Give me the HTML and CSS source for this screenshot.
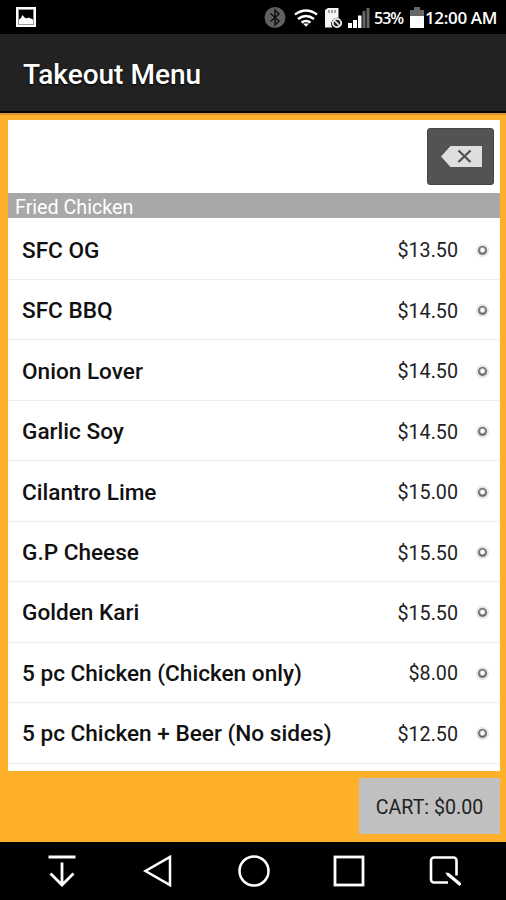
FILE: index.html
```
<!DOCTYPE html>
<html lang="en">
<head>
<meta charset="utf-8">
<title>Takeout Menu</title>
<link rel="stylesheet" href="styles.css">
</head>
<body>
<div class="screen">
  <div class="status">
    <svg class="photo" width="20" height="20" viewBox="0 0 20 20"><rect width="20" height="20" fill="#fff"/><rect x="2.500" y="2.500" width="15" height="15" fill="#000" stroke="#999"/><path d="M3 12.500l2-1.500 1.500-3 2 2.500 2 1 2-1 4.500 2V17H3z" fill="#fff"/></svg>
    <svg class="indicators" width="106" height="24" viewBox="0 0 106 24">
      <circle cx="11" cy="12.500" r="10.500" fill="#606060"/>
      <path d="M6.500 8.500l8.500 7.500-4 4V5l4 4-8.500 7.500" fill="none" stroke="#111" stroke-width="1.500"/>
      <g fill="none" stroke="#fff" stroke-width="2.400"><path d="M31 9.500q11-8 22 0M34 14q8-6 16 0M37.500 17.500q4.500-3 9 0"/></g>
      <path d="M39 18.500h6l-3 3.200z" fill="#fff"/>
      <path d="M61 5l3-2h10.500v10a6 6 0 0 0-6 9.500H61z" fill="#f5f5f5"/>
      <path d="M65 5v3M68 5v3M71 5v3" stroke="#555" stroke-width="1"/>
      <circle cx="73" cy="18" r="4.200" fill="#222" stroke="#eee" stroke-width="1.800"/><path d="M70 15l6 6" stroke="#eee" stroke-width="1.500"/>
      <path d="M84 18h4v5h-4zM89 15h4v8h-4zM94 10.500h3.500V23H94z" fill="#fff"/>
      <path d="M98.500 6h3v17h-3zM102.500 3h3v20h-3z" fill="#666"/>
    </svg>
    <span class="percent">53%</span>
    <svg class="battery" width="14" height="22" viewBox="0 0 14 22"><path d="M4 0h6v3h4v8H0V3h4z" fill="#666"/><path d="M0 9h14v12H0z" fill="#fff"/></svg>
    <span class="time">12:00 AM</span>
  </div>
  <header class="titlebar"><h1>Takeout Menu</h1></header>
  <main class="content">
    <section class="panel">
      <div class="search">
        <button class="erase" aria-label="Clear"><svg width="41" height="21" viewBox="0 0 41 21"><path d="M0 10.500L9.500 0H41v21H9.500z" fill="#dedede"/><path d="M17.500 4.500l12 11.500m0-11.500l-12 11.500" stroke="#505050" stroke-width="2.300"/></svg></button>
      </div>
      <h2>Fried Chicken</h2>
      <ul class="menu">
        <li><span class="name">SFC OG</span><span class="price">$13.50</span><i class="knob"></i></li>
        <li><span class="name">SFC BBQ</span><span class="price">$14.50</span><i class="knob"></i></li>
        <li><span class="name">Onion Lover</span><span class="price">$14.50</span><i class="knob"></i></li>
        <li><span class="name">Garlic Soy</span><span class="price">$14.50</span><i class="knob"></i></li>
        <li><span class="name">Cilantro Lime</span><span class="price">$15.00</span><i class="knob"></i></li>
        <li><span class="name">G.P Cheese</span><span class="price">$15.50</span><i class="knob"></i></li>
        <li><span class="name">Golden Kari</span><span class="price">$15.50</span><i class="knob"></i></li>
        <li><span class="name">5 pc Chicken (Chicken only)</span><span class="price">$8.00</span><i class="knob"></i></li>
        <li><span class="name">5 pc Chicken + Beer (No sides)</span><span class="price">$12.50</span><i class="knob"></i></li>
      </ul>
    </section>
    <button class="cart">CART: $0.00</button>
  </main>
  <nav class="navbar">
    <svg width="32" height="34" viewBox="0 0 32 34"><path d="M2.500 3h27M16 8.500v22M4.500 19.500L16 31l11.500-11.500" fill="none" stroke="#fff" stroke-width="2.800"/></svg>
    <svg width="32" height="34" viewBox="0 0 32 34"><path d="M28 3v28L3.500 17z" fill="none" stroke="#fff" stroke-width="2.500"/></svg>
    <svg width="32" height="34" viewBox="0 0 32 34"><circle cx="16" cy="17" r="14.500" fill="none" stroke="#fff" stroke-width="2.500"/></svg>
    <svg width="32" height="34" viewBox="0 0 32 34"><rect x="2" y="3" width="28" height="28" fill="none" stroke="#fff" stroke-width="2.800"/></svg>
    <svg width="32" height="34" viewBox="0 0 32 34"><path d="M19 28.500H5a3 3 0 0 1-3-3V6.500a3 3 0 0 1 3-3h19.500a3 3 0 0 1 3 3v15" fill="none" stroke="#fff" stroke-width="2.600"/><path d="M16.500 18.500l1.500 3L30.500 32l2-2.500L20 19z" fill="#fff"/></svg>
  </nav>
</div>
</body>
</html>
```
FILE: styles.css
```
* { box-sizing: border-box; }
body { margin: 0; background: #000; font-family: Roboto, sans-serif; }
.screen { width: 506px; height: 900px; display: flex; flex-direction: column; overflow: hidden; }
.status { height: 34px; padding: 0 8px 0 16px; display: flex; align-items: center; background: #000; color: #fff; }
.photo { margin-right: auto; }
.indicators { margin-right: 4px; }
.percent, .time { font: 600 17px/34px "Open Sans", sans-serif; white-space: nowrap; }
.percent { width: 36px; padding-top: 1px; font-size: 16px; letter-spacing: -1px; }
.battery { margin-top: 1px; }
.time { width: 74px; padding: 1px 0 0 1px; letter-spacing: -0.35px; }
.titlebar { height: 79px; padding: 4px 23px 0; display: flex; align-items: center; background: #222; border-bottom: 2px solid #080500; }
h1 { margin: 0; color: #fff; font-size: 28px; font-weight: 500; text-shadow: 0 1px 2px #000; }
.content { height: 729px; padding: 7px 6px 0 8px; background: #ffb02b; border-top: 2px solid #db9528; display: flex; flex-direction: column; }
.panel { height: 651px; margin-top: -2px; background: #fff; flex: none; overflow: hidden; }
.search { height: 73px; padding: 8px 6px 0; display: flex; justify-content: flex-end; }
.erase { width: 67px; height: 57px; padding: 0 0 0 1px; border: 1px solid #444; border-radius: 3px; background: #535355; display: flex; align-items: center; justify-content: center; }
h2 { margin: 0; height: 25px; padding-left: 7px; background: #a8a8a8; color: #fff; font-size: 19.700px; font-weight: 400; line-height: 29px; overflow: hidden; }
.menu { list-style: none; margin: 0; padding: 1.600px 0 0; }
.menu li { height: 60.45px; padding: 2px 11px 0 14px; display: flex; align-items: center; border-bottom: 1px solid #eee; }
.name { flex: 1; color: #111; font-size: 22.600px; font-weight: 500; white-space: nowrap; }
.price { padding-top: 1px; color: #222; font-size: 19.700px; }
.knob { width: 13px; height: 13px; margin-left: 18px; border: 2px solid #e4e4e4; border-radius: 50%; background: radial-gradient(circle at 50% 45%, #fff 0 1.500px, #666 3.500px 4px, #999 5px); }
.cart { align-self: flex-end; flex: none; width: 141px; height: 56px; margin-top: 7px; padding: 2px 0 0; border: 0; background: #c0c0c0; color: #222; font: 400 19.600px Roboto, sans-serif; white-space: nowrap; }
.navbar { height: 58px; flex: none; padding: 0 45px 1px 46px; display: flex; align-items: center; justify-content: space-between; background: #000; }
```
